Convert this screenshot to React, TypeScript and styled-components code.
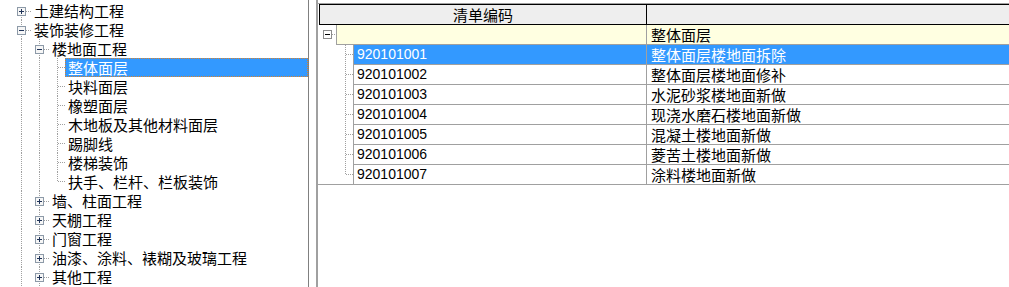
import React from "react";
import styled, { createGlobalStyle, css } from "styled-components";

const GlobalStyle = createGlobalStyle`
  html, body { margin: 0; padding: 0; background: #fff; }
  #root { width: 1009px; height: 287px; }
`;

const Page = styled.div`
  display: flex;
  width: 1009px;
  height: 287px;
  overflow: hidden;
  background: #fff;
  font-family: "Noto Sans CJK SC", sans-serif;
  font-size: 15px;
  color: #000;
`;

const TreePanel = styled.div`
  flex: none;
  width: 308px;
  box-sizing: border-box;
  padding-top: 1px;
  overflow: hidden;
`;

const TreeRow = styled.div`
  display: flex;
  height: 19px;
`;

const TreeLabel = styled.div<{ $selected?: boolean }>`
  flex: 1;
  height: 19px;
  line-height: 19px;
  padding-left: 3px;
  white-space: nowrap;
  box-sizing: border-box;
  ${(p) =>
    p.$selected &&
    css`
      background: #3399ff;
      color: #fff;
      outline: 1px dotted #d9822b;
      outline-offset: -1px;
    `}
`;

const Splitter = styled.div`
  flex: none;
  width: 8px;
  box-sizing: border-box;
  border-left: 1px solid #808080;
`;

const GridPanel = styled.div`
  flex: 1;
  min-width: 0;
  box-sizing: border-box;
  border-left: 2px solid #a0a0a0;
  padding-top: 3px;
`;

const GridFrame = styled.div`
  border-top: 1px solid #a0a0a0;
`;

const HeaderRow = styled.div`
  display: flex;
  height: 21px;
  margin-left: 1px;
  box-sizing: border-box;
  border: 1px solid #000;
  border-right: none;
  background: #eeeeee;
`;

const HeaderCell = styled.div<{ $w?: number }>`
  box-sizing: border-box;
  height: 19px;
  line-height: 19px;
  text-align: center;
  white-space: nowrap;
  ${(p) =>
    p.$w
      ? css`
          width: ${p.$w}px;
          flex: none;
        `
      : css`
          flex: 1;
          border-left: 1px solid #000;
        `}
`;

const GridRow = styled.div`
  display: flex;
  height: 20px;
`;

type Tone = "group" | "selected" | "plain";

const toneStyle = (t: Tone) =>
  t === "group"
    ? css`
        background: #ffffe1;
        color: #000;
      `
    : t === "selected"
    ? css`
        background: #3399ff;
        color: #fff;
      `
    : css`
        background: #fff;
        color: #000;
      `;

const CodeCell = styled.div<{ $w: number; $tone: Tone }>`
  flex: none;
  width: ${(p) => p.$w}px;
  height: 20px;
  box-sizing: border-box;
  line-height: 19px;
  padding-left: 3px;
  border-left: 1px solid #a0a0a0;
  border-bottom: 1px solid #a0a0a0;
  font-family: "Liberation Sans", Arial, sans-serif;
  font-size: 14px;
  white-space: nowrap;
  ${(p) => toneStyle(p.$tone)}
`;

const NameCell = styled.div<{ $tone: Tone }>`
  flex: 1;
  height: 20px;
  box-sizing: border-box;
  line-height: 19px;
  padding-left: 4px;
  border-left: 1px solid #a0a0a0;
  border-bottom: 1px solid #a0a0a0;
  white-space: nowrap;
  ${(p) => toneStyle(p.$tone)}
`;

const ConnectorBox = styled.div<{ $w: number; $last?: boolean }>`
  flex: none;
  width: ${(p) => p.$w}px;
  height: 20px;
  box-sizing: border-box;
  ${(p) => p.$last && "border-bottom: 1px solid #a0a0a0;"}
  svg { display: block; }
`;

const TreeCell = styled.div<{ $w: number }>`
  flex: none;
  width: ${(p) => p.$w}px;
  height: 19px;
  svg { display: block; }
`;

const DOT = "#a0a0a0";

type Kind = "first" | "mid" | "last" | "through" | "none";

function TreeConnector({
  kind,
  expander,
  width = 18,
}: {
  kind: Kind;
  expander?: "plus" | "minus";
  width?: number;
}) {
  const cy = expander ? 10 : 9;
  let v: [number, number] | null = null;
  if (kind === "first") v = [cy, 19];
  if (kind === "mid" || kind === "through") v = [0, 19];
  if (kind === "last") v = [0, cy + 1];
  const showH = kind !== "through" && kind !== "none";
  return (
    <TreeCell $w={width}>
      <svg width={width} height={19} shapeRendering="crispEdges">
        {v && (
          <line
            x1={8.5}
            x2={8.5}
            y1={v[0]}
            y2={v[1]}
            stroke={DOT}
            strokeDasharray="1 1"
          />
        )}
        {showH && (
          <line
            x1={9}
            x2={width}
            y1={cy + 0.5}
            y2={cy + 0.5}
            stroke={DOT}
            strokeDasharray="1 1"
          />
        )}
        {expander && (
          <g>
            <rect x={4.5} y={6.5} width={8} height={8} fill="#f6f6f6" stroke="#8d9aa8" />
            <rect x={6} y={10} width={5} height={1} fill="#1f3358" />
            {expander === "plus" && <rect x={8} y={8} width={1} height={5} fill="#1f3358" />}
          </g>
        )}
      </svg>
    </TreeCell>
  );
}

type TreeItem = {
  label: string;
  level: number;
  kind: Kind;
  guides: boolean[];
  expander?: "plus" | "minus";
  selected?: boolean;
};

const leaf = (label: string, kind: Kind = "mid"): TreeItem => ({
  label,
  level: 2,
  kind,
  guides: [true, true],
});

const treeItems: TreeItem[] = [
  { label: "土建结构工程", level: 0, kind: "first", guides: [], expander: "plus" },
  { label: "装饰装修工程", level: 0, kind: "mid", guides: [], expander: "minus" },
  { label: "楼地面工程", level: 1, kind: "mid", guides: [true], expander: "minus" },
  { ...leaf("整体面层"), selected: true },
  leaf("块料面层"),
  leaf("橡塑面层"),
  leaf("木地板及其他材料面层"),
  leaf("踢脚线"),
  leaf("楼梯装饰"),
  leaf("扶手、栏杆、栏板装饰", "last"),
  { label: "墙、柱面工程", level: 1, kind: "mid", guides: [true], expander: "plus" },
  { label: "天棚工程", level: 1, kind: "mid", guides: [true], expander: "plus" },
  { label: "门窗工程", level: 1, kind: "mid", guides: [true], expander: "plus" },
  { label: "油漆、涂料、裱糊及玻璃工程", level: 1, kind: "mid", guides: [true], expander: "plus" },
  { label: "其他工程", level: 1, kind: "mid", guides: [true], expander: "plus" },
];

const Spacer = styled.div`
  flex: none;
  width: 13px;
`;

function Tree() {
  return (
    <TreePanel>
      {treeItems.map((it, i) => (
        <TreeRow key={i}>
          <Spacer />
          {it.guides.map((g, j) => (
            <TreeConnector key={j} kind={g ? "through" : "none"} />
          ))}
          <TreeConnector
            kind={it.kind}
            expander={it.expander}
            width={it.expander ? 18 : 16}
          />
          <TreeLabel $selected={it.selected}>{it.label}</TreeLabel>
        </TreeRow>
      ))}
    </TreePanel>
  );
}

function GroupConnector() {
  return (
    <ConnectorBox $w={18}>
      <svg width={18} height={19} shapeRendering="crispEdges">
        <line x1={14} x2={18} y1={9.5} y2={9.5} stroke={DOT} strokeDasharray="1 1" />
        <rect x={5.5} y={5.5} width={8} height={8} fill="#fff" stroke="#8c8c8c" />
        <rect x={7} y={9} width={5} height={1} fill="#000" />
      </svg>
    </ConnectorBox>
  );
}

function ItemConnector({ last }: { last?: boolean }) {
  return (
    <ConnectorBox $w={35} $last={last}>
      <svg width={35} height={19} shapeRendering="crispEdges">
        <line
          x1={27.5}
          x2={27.5}
          y1={0}
          y2={last ? 10 : 19}
          stroke={DOT}
          strokeDasharray="1 1"
        />
        <line x1={28} x2={35} y1={9.5} y2={9.5} stroke={DOT} strokeDasharray="1 1" />
      </svg>
    </ConnectorBox>
  );
}

const items = [
  { code: "920101001", name: "整体面层楼地面拆除" },
  { code: "920101002", name: "整体面层楼地面修补" },
  { code: "920101003", name: "水泥砂浆楼地面新做" },
  { code: "920101004", name: "现浇水磨石楼地面新做" },
  { code: "920101005", name: "混凝土楼地面新做" },
  { code: "920101006", name: "菱苦土楼地面新做" },
  { code: "920101007", name: "涂料楼地面新做" },
];

function Grid() {
  return (
    <GridPanel>
      <GridFrame>
        <HeaderRow>
          <HeaderCell $w={326}>清单编码</HeaderCell>
          <HeaderCell />
        </HeaderRow>
        <GridRow>
          <GroupConnector />
          <CodeCell $w={310} $tone="group" />
          <NameCell $tone="group">整体面层</NameCell>
        </GridRow>
        {items.map((it, i) => {
          const tone: Tone = i === 0 ? "selected" : "plain";
          const last = i === items.length - 1;
          return (
            <GridRow key={it.code}>
              <ItemConnector last={last} />
              <CodeCell $w={293} $tone={tone}>
                {it.code}
              </CodeCell>
              <NameCell $tone={tone}>{it.name}</NameCell>
            </GridRow>
          );
        })}
      </GridFrame>
    </GridPanel>
  );
}

export default function App() {
  return (
    <>
      <GlobalStyle />
      <Page>
        <Tree />
        <Splitter />
        <Grid />
      </Page>
    </>
  );
}
